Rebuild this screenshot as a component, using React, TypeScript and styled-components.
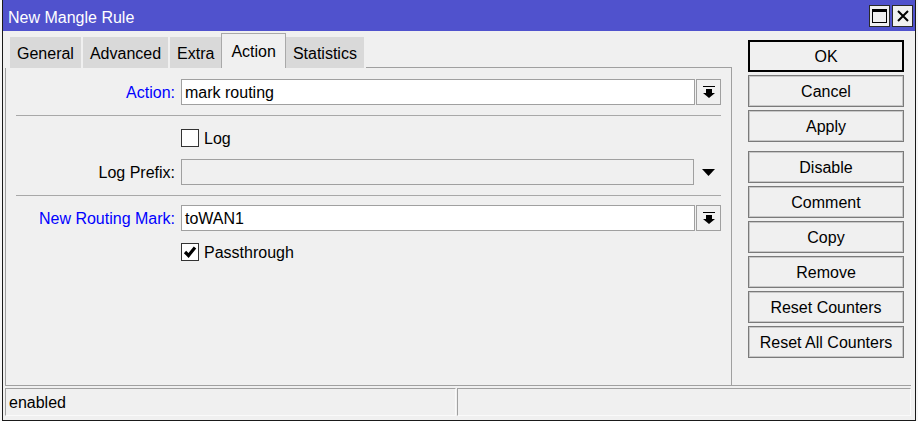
import React from 'react';
import styled, { createGlobalStyle, css } from 'styled-components';

const GlobalStyle = createGlobalStyle`
  html, body { margin: 0; padding: 0; background: #f7f7f7; }
  body { font-family: "Liberation Sans", Arial, sans-serif; font-size: 16px; color: #000; }
  * { box-sizing: border-box; }
`;

const Window = styled.div`
  margin-left: 2px;
  width: 914px;
  height: 421px;
  border: 1px solid #1a1a1a;
  border-top: none;
  background: #f0f0f0;
  display: flex;
  flex-direction: column;
`;

const TitleBar = styled.div`
  height: 31px;
  flex: none;
  background: #5052cd;
  color: #fff;
  display: flex;
  align-items: center;
  padding: 0 2px 0 5px;
`;

const TitleText = styled.span`
  font-size: 16px;
  line-height: 16px;
  padding-top: 5px;
`;

const TitleButtons = styled.div`
  margin-left: auto;
  display: flex;
  gap: 2px;
`;

const TitleButton = styled.div`
  width: 21px;
  height: 22px;
  border: 1px solid #2a2a2a;
  background: #f0f0f0;
  display: flex;
  align-items: center;
  justify-content: center;
`;

const Body = styled.div`
  flex: 1;
  display: flex;
  flex-direction: column;
  padding: 2px 0 0 2px;
  min-height: 0;
`;

const Main = styled.div`
  flex: 1;
  display: flex;
  min-height: 0;
`;

const LeftCol = styled.div`
  width: 727px;
  display: flex;
  flex-direction: column;
`;

const TabsRow = styled.div`
  height: 35px;
  flex: none;
  display: flex;
  align-items: flex-end;
  padding-left: 5px;
`;

const Tab = styled.div<{ $active?: boolean }>`
  height: 31px;
  padding: 2px 7px 0;
  margin-right: 2px;
  background: #d9d9d9;
  display: flex;
  align-items: center;
  white-space: nowrap;
  ${(p) =>
    p.$active &&
    css`
      height: 35px;
      padding: 1px 9px 0;
      margin-left: -2px;
      margin-right: 0;
      background: #f0f0f0;
      border: 1px solid #a9a9a9;
      border-bottom: none;
    `}
`;

const TabFiller = styled.div`
  flex: 1;
  align-self: stretch;
  border-bottom: 1px solid #a0a0a0;
`;

const Panel = styled.div`
  flex: 1;
  border-left: 1px solid #a0a0a0;
  border-right: 1px solid #a0a0a0;
  padding: 11px 10px 0 10px;
  display: flex;
  flex-direction: column;
`;

const Row = styled.div<{ $mt?: number }>`
  display: grid;
  grid-template-columns: 159px 540px;
  column-gap: 6px;
  align-items: center;
  margin-top: ${(p) => p.$mt ?? 0}px;
`;

const Label = styled.div<{ $blue?: boolean }>`
  text-align: right;
  white-space: nowrap;
  padding-top: 2px;
  color: ${(p) => (p.$blue ? '#0000ff' : '#000')};
`;

const Separator = styled.div<{ $mt: number }>`
  height: 1px;
  background: #a8a8a8;
  margin-top: ${(p) => p.$mt}px;
`;

const Combo = styled.div`
  display: flex;
  gap: 1px;
  height: 26px;
`;

const TextBox = styled.div<{ $disabled?: boolean }>`
  flex: 1;
  height: 26px;
  border: 1px solid #a0a0a0;
  background: ${(p) => (p.$disabled ? '#f0f0f0' : '#fff')};
  padding: 2px 3px 0;
  display: flex;
  align-items: center;
  white-space: nowrap;
`;

const DropButton = styled.div`
  width: 25px;
  height: 26px;
  border: 1px solid #a0a0a0;
  background: #f0f0f0;
  display: flex;
  align-items: center;
  justify-content: center;
`;

const ArrowSlot = styled.div`
  width: 26px;
  display: flex;
  align-items: center;
  justify-content: center;
`;

const CheckRow = styled.label`
  display: flex;
  align-items: center;
  gap: 5px;
  height: 18px;
`;

const CheckText = styled.span`
  padding-top: 2px;
`;

const CheckBox = styled.span`
  width: 18px;
  height: 18px;
  border: 1px solid #333;
  background: #fff;
  display: flex;
  align-items: center;
  justify-content: center;
`;

const ButtonCol = styled.div`
  width: 156px;
  margin-left: 16px;
  margin-top: 7px;
  display: flex;
  flex-direction: column;
  gap: 9px;
`;

const ButtonGroup = styled.div`
  display: flex;
  flex-direction: column;
  gap: 3px;
`;

const Button = styled.div<{ $default?: boolean }>`
  height: 32px;
  border: 1px solid #7a7a7a;
  box-shadow: inset 0 0 0 1px #c8c8c8;
  background: #f0f0f0;
  padding-top: 2px;
  display: flex;
  align-items: center;
  justify-content: center;
  white-space: nowrap;
  ${(p) =>
    p.$default &&
    css`
      border: 1px solid #000;
      box-shadow: inset 0 0 0 1px #000;
    `}
`;

const StatusBar = styled.div`
  height: 35px;
  flex: none;
  margin-right: 4px;
  border-top: 1px solid #a0a0a0;
  padding-top: 2px;
  display: flex;
  gap: 1px;
`;

const StatusField = styled.div<{ $w?: number }>`
  height: 28px;
  ${(p) => (p.$w ? `width: ${p.$w}px;` : 'flex: 1;')}
  border-top: 1px solid #a0a0a0;
  border-left: 1px solid #a0a0a0;
  border-bottom: 1px solid #fafafa;
  border-right: 1px solid #fafafa;
  padding: 2px 0 0 3px;
  display: flex;
  align-items: center;
`;

const DropIcon = () => (
  <svg width="12" height="12" viewBox="0 0 12 12">
    <rect x="0" y="0" width="12" height="1" fill="#000" />
    <rect x="3" y="3" width="6" height="4" fill="#000" />
    <polygon points="0,7 12,7 6,12" fill="#000" />
  </svg>
);

const TriangleIcon = () => (
  <svg width="13" height="7" viewBox="0 0 13 7">
    <polygon points="0,0 13,0 6.5,7" fill="#000" />
  </svg>
);

const CheckMark = () => (
  <svg width="14" height="14" viewBox="0 0 14 14">
    <polyline points="2,7 5.5,10.5 12,2.5" fill="none" stroke="#000" strokeWidth="3.2" />
  </svg>
);

const MaxIcon = () => (
  <svg width="15" height="14" viewBox="0 0 15 14">
    <rect x="0.5" y="0.5" width="14" height="13" fill="none" stroke="#000" />
    <rect x="0" y="0" width="15" height="3" fill="#000" />
  </svg>
);

const CloseIcon = () => (
  <svg width="12" height="12" viewBox="0 0 12 12">
    <path d="M1 1 L11 11 M11 1 L1 11" stroke="#000" strokeWidth="2" />
  </svg>
);

export default function App() {
  return (
    <>
      <GlobalStyle />
      <Window>
        <TitleBar>
          <TitleText>New Mangle Rule</TitleText>
          <TitleButtons>
            <TitleButton>
              <MaxIcon />
            </TitleButton>
            <TitleButton>
              <CloseIcon />
            </TitleButton>
          </TitleButtons>
        </TitleBar>
        <Body>
          <Main>
            <LeftCol>
              <TabsRow>
                <Tab>General</Tab>
                <Tab>Advanced</Tab>
                <Tab>Extra</Tab>
                <Tab $active>Action</Tab>
                <Tab>Statistics</Tab>
                <TabFiller />
              </TabsRow>
              <Panel>
                <Row>
                  <Label $blue>Action:</Label>
                  <Combo>
                    <TextBox>mark routing</TextBox>
                    <DropButton>
                      <DropIcon />
                    </DropButton>
                  </Combo>
                </Row>
                <Separator $mt={10} />
                <Row $mt={13}>
                  <span />
                  <CheckRow>
                    <CheckBox />
                    <CheckText>Log</CheckText>
                  </CheckRow>
                </Row>
                <Row $mt={12}>
                  <Label>Log Prefix:</Label>
                  <Combo>
                    <TextBox $disabled />
                    <ArrowSlot>
                      <TriangleIcon />
                    </ArrowSlot>
                  </Combo>
                </Row>
                <Separator $mt={10} />
                <Row $mt={9}>
                  <Label $blue>New Routing Mark:</Label>
                  <Combo>
                    <TextBox>toWAN1</TextBox>
                    <DropButton>
                      <DropIcon />
                    </DropButton>
                  </Combo>
                </Row>
                <Row $mt={12}>
                  <span />
                  <CheckRow>
                    <CheckBox>
                      <CheckMark />
                    </CheckBox>
                    <CheckText>Passthrough</CheckText>
                  </CheckRow>
                </Row>
              </Panel>
            </LeftCol>
            <ButtonCol>
              <ButtonGroup>
                <Button $default>OK</Button>
                <Button>Cancel</Button>
                <Button>Apply</Button>
              </ButtonGroup>
              <ButtonGroup>
                <Button>Disable</Button>
                <Button>Comment</Button>
                <Button>Copy</Button>
                <Button>Remove</Button>
                <Button>Reset Counters</Button>
                <Button>Reset All Counters</Button>
              </ButtonGroup>
            </ButtonCol>
          </Main>
          <StatusBar>
            <StatusField $w={451}>enabled</StatusField>
            <StatusField />
          </StatusBar>
        </Body>
      </Window>
    </>
  );
}
